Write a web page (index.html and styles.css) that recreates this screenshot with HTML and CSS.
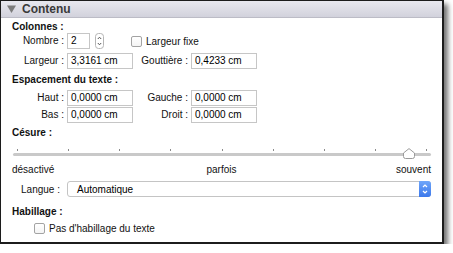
FILE: index.html
```html
<!DOCTYPE html>
<html lang="fr">
<head>
    <meta charset="UTF-8">
    <meta name="viewport" content="width=device-width, initial-scale=1.0">
    <title>Contenu</title>
    <link rel="stylesheet" href="styles.css">
</head>
<body>
    <div class="panel">
        <div class="panel-header">
            <svg class="disclosure" width="9" height="8" viewBox="0 0 9 8">
                <path d="M0 0.5h9L4.5 8z" fill="#7c7c7c" />
            </svg>
            <span>Contenu</span>
        </div>

        <div class="panel-body">
            <div class="section-title">Colonnes :</div>
            <div class="row-first">
                <span class="field-label">Nombre :</span>
                <div class="input input-short">2</div>
                <svg class="stepper" width="9" height="16" viewBox="0 0 9 16">
                    <rect x="0.5" y="0.5" width="8" height="15" rx="3" fill="#fff" stroke="#b5b5b5" />
                    <polyline points="2.8 6 4.5 4.2 6.2 6" fill="none" stroke="#555" stroke-width="1" />
                    <polyline points="2.8 10 4.5 11.8 6.2 10" fill="none" stroke="#555" stroke-width="1" />
                </svg>
                <span class="checkbox"></span>
                <span class="check-label">Largeur fixe</span>
            </div>
            <div class="field-grid spaced">
                <span class="field-label">Largeur :</span>
                <div class="input">3,3161 cm</div>
                <span class="field-label">Gouttière :</span>
                <div class="input">0,4233 cm</div>
            </div>

            <div class="section-title title-gap">Espacement du texte :</div>
            <div class="field-grid tight">
                <span class="field-label">Haut :</span>
                <div class="input">0,0000 cm</div>
                <span class="field-label">Gauche :</span>
                <div class="input">0,0000 cm</div>
                <span class="field-label">Bas :</span>
                <div class="input">0,0000 cm</div>
                <span class="field-label">Droit :</span>
                <div class="input">0,0000 cm</div>
            </div>

            <div class="section-title title-gap-small">Césure :</div>
            <div class="slider">
                <div class="ticks">
                    <span></span><span></span><span></span><span></span><span></span>
                    <span></span><span></span><span></span><span></span>
                </div>
                <div class="track"></div>
                <svg class="thumb" width="12" height="11" viewBox="0 0 12 11">
                    <path d="M6 0.6L11.5 5V8.5Q11.5 10.5 9.5 10.5H2.5Q0.5 10.5 0.5 8.5V5Z" fill="#fff" stroke="#9a9a9a" />
                </svg>
            </div>
            <div class="slider-labels">
                <span>désactivé</span>
                <span>parfois</span>
                <span class="right">souvent</span>
            </div>

            <div class="row-popup">
                <span class="popup-label">Langue :</span>
                <div class="popup">
                    <span>Automatique</span>
                    <div class="popup-arrows">
                        <svg width="12" height="16" viewBox="0 0 12 16">
                            <polyline points="4 6 6 4 8 6" fill="none" stroke="#fff" stroke-width="1.2" />
                            <polyline points="4 10 6 12 8 10" fill="none" stroke="#fff" stroke-width="1.2" />
                        </svg>
                    </div>
                </div>
            </div>

            <div class="section-title title-gap-large">Habillage :</div>
            <div class="row-check">
                <span class="checkbox"></span>
                <span class="check-label">Pas d'habillage du texte</span>
            </div>
        </div>
    </div>
</body>
</html>
```

FILE: styles.css
```css
body {
    margin: 0;
    background-color: #ffffff;
    font-family: "Liberation Sans", Arial, sans-serif;
    font-size: 10px;
    color: #111;
}

.panel {
    width: 441px;
    height: 241px;
    border-style: solid;
    border-color: #1c1c1c;
    border-width: 1px 2px 2px 1px;
    background-color: #ffffff;
    box-shadow: 4px 4px 5px rgba(0, 0, 0, 0.55);
}

.panel-header {
    height: 16px;
    border-bottom: 1px solid #bcbcc6;
    background: linear-gradient(#e8e8ef, #d2d2dc);
    display: flex;
    align-items: center;
    padding-left: 6px;
    font-size: 12px;
    font-weight: bold;
    color: #3a3a3a;
}

.disclosure {
    margin-right: 6px;
}

.panel-body {
    padding: 2px 11px 0 11px;
}

.section-title {
    font-weight: bold;
    line-height: 13px;
}

.title-gap {
    margin-top: 4px;
    line-height: 14px;
}

.title-gap-small {
    margin-top: 3px;
    line-height: 14px;
}

.title-gap-large {
    margin-top: 8px;
    line-height: 14px;
}

.field-label {
    text-align: right;
    line-height: 16px;
}

.input {
    box-sizing: border-box;
    height: 16px;
    border: 1px solid #c6c6c6;
    padding-left: 3px;
    line-height: 14px;
    color: #000;
}

.row-first {
    display: flex;
    align-items: center;
    height: 16px;
}

.row-first .field-label {
    width: 52px;
    margin-right: 3px;
}

.input-short {
    width: 23px;
}

.stepper {
    margin-left: 5px;
}

.checkbox {
    box-sizing: border-box;
    width: 11px;
    height: 11px;
    border: 1px solid #a3a3a3;
    border-radius: 2px;
    background: linear-gradient(#ffffff, #f4f4f4);
}

.row-first .checkbox {
    margin-left: 27px;
}

.check-label {
    margin-left: 4px;
}

.field-grid {
    display: grid;
    grid-template-columns: 52px 66px 52px 66px;
    column-gap: 3px;
}

.field-grid.spaced {
    margin-top: 4px;
}

.field-grid.tight {
    margin-top: 3px;
    row-gap: 1px;
}

.slider {
    position: relative;
    width: 418px;
    height: 20px;
    margin-left: 1px;
}

.ticks {
    display: flex;
    justify-content: space-between;
    padding: 9px 4px 0 4px;
    height: 2px;
}

.ticks span {
    width: 1px;
    height: 2px;
    background-color: #8a8a8a;
}

.track {
    margin-top: 2px;
    height: 3px;
    border-radius: 2px;
    background-color: #c9c9c9;
}

.thumb {
    position: absolute;
    left: 390px;
    top: 8px;
}

.slider-labels {
    display: grid;
    grid-template-columns: 1fr auto 1fr;
    width: 419px;
    margin-top: 3px;
    line-height: 14px;
}

.slider-labels .right {
    justify-self: end;
}

.row-popup {
    display: flex;
    align-items: center;
    margin-top: 4px;
}

.popup-label {
    width: 48px;
    margin-right: 7px;
    text-align: right;
}

.popup {
    box-sizing: border-box;
    width: 364px;
    height: 16px;
    border: 1px solid #c4c4c4;
    border-radius: 3px;
    display: flex;
    align-items: center;
    justify-content: space-between;
    padding-left: 9px;
    color: #000;
}

.popup-arrows {
    width: 12px;
    height: 16px;
    margin-right: -1px;
    border-radius: 0 3px 3px 0;
    background: linear-gradient(#6fa6fa, #3c78eb);
}

.popup-arrows svg {
    display: block;
}

.row-check {
    display: flex;
    align-items: center;
    margin-top: 2px;
    padding-left: 22px;
    height: 14px;
}
```
